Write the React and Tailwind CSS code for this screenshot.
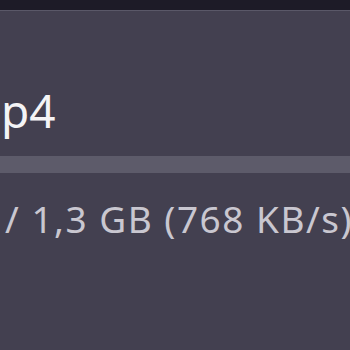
export default function App() {
  return (
    <div
      className="w-[350px] h-[350px] overflow-hidden bg-[#434050] flex flex-col"
      style={{ fontFamily: '"Noto Sans", "Open Sans", sans-serif' }}
    >
      <div className="h-[10px] bg-[#1d1b27] border-b border-[#5a5868] box-content" />
      <div className="mt-[72px] h-[50px] flex items-end pl-[1px] text-[46px] leading-none text-[#f4f4f6] whitespace-nowrap">
        p4
      </div>
      <div className="mt-[23px] h-[17px] bg-[#5d5b6a]" />
      <div className="mt-[27px] pl-[5px] text-[37px] tracking-[1.5px] leading-none text-[#c9c7d0] whitespace-nowrap">
        / 1,3 GB (768 KB/s)
      </div>
    </div>
  );
}
